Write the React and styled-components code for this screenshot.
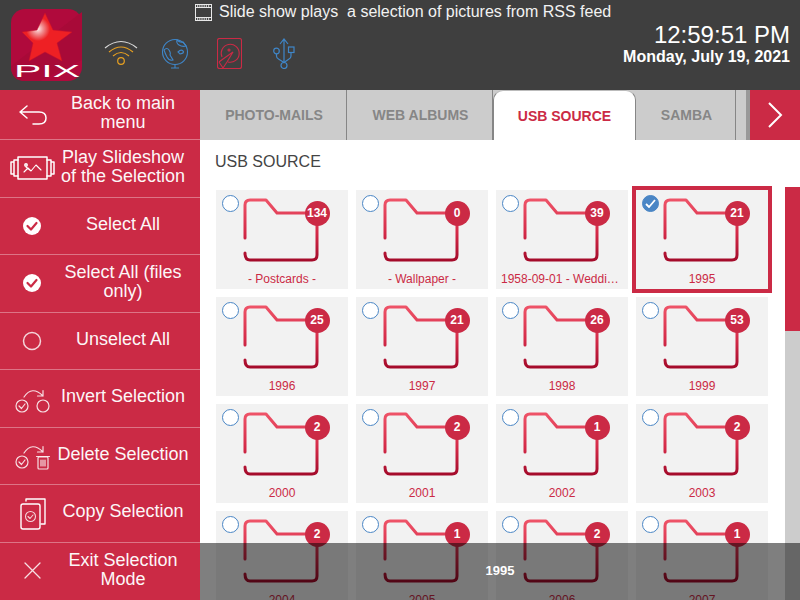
import React from 'react';
import styled, { createGlobalStyle } from 'styled-components';

const RED = '#cb2a45';

const GlobalStyle = createGlobalStyle`
  html, body {
    margin: 0;
    padding: 0;
    width: 800px;
    height: 600px;
    overflow: hidden;
    background: white;
    font-family: "Liberation Sans", Arial, sans-serif;
  }
  * {
    box-sizing: border-box;
  }
`;

const Page = styled.div`
  width: 800px;
  height: 600px;
  display: flex;
  flex-direction: column;
  overflow: hidden;
`;

const Header = styled.header`
  height: 90px;
  flex: none;
  display: flex;
  background-color: #3f3f3f;
  color: white;
`;

const Logo = styled.svg`
  width: 71px;
  height: 72px;
  margin: 9px 22px 0 11px;
  flex: none;
`;

const HeaderMiddle = styled.div`
  display: flex;
  flex-direction: column;
`;

const Title = styled.div`
  display: flex;
  align-items: center;
  gap: 7px;
  height: 24px;
  padding-left: 91px;
  font-size: 16px;
  color: #f2f2f2;
  white-space: pre;
`;

const StatusIcons = styled.div`
  display: flex;
  align-items: center;
  margin-top: 13px;
`;

const StatusIcon = styled.svg`
  flex: none;
  margin-left: ${(p) => p.$offset || 0}px;
  fill: none;
`;

const Clock = styled.div`
  margin-left: auto;
  padding: 21px 10px 0 0;
  text-align: right;
`;

const Time = styled.div`
  font-size: 24px;
  line-height: 27px;
`;

const DateLine = styled.div`
  font-size: 16px;
  font-weight: 700;
  line-height: 17px;
`;

const Main = styled.div`
  flex: 1;
  display: flex;
  min-height: 0;
  position: relative;
`;

const Sidebar = styled.nav`
  width: 200px;
  flex: none;
  display: flex;
  flex-direction: column;
  background-color: ${RED};
`;

const MenuItem = styled.div`
  height: ${(p) => (p.$first ? '50px' : '57.5px')};
  flex: none;
  display: grid;
  grid-template-columns: 48px 134px;
  align-items: center;
  padding-left: 8px;
  border-bottom: ${(p) => (p.$last ? 'none' : '1px solid rgba(255, 255, 255, 0.35)')};
  color: white;
`;

const MenuIcon = styled.svg`
  width: 48px;
  height: 40px;
  display: block;
  fill: none;
  stroke: white;
  stroke-width: 1.5;
  stroke-linecap: round;
  stroke-linejoin: round;
`;

const MenuLabel = styled.div`
  font-size: 18px;
  line-height: 19px;
  text-align: center;
  opacity: 0.96;
  margin-top: -3px;
`;

const Panel = styled.div`
  flex: 1;
  min-width: 0;
  display: flex;
  flex-direction: column;
`;

const TabBar = styled.div`
  height: 50px;
  flex: none;
  display: flex;
  background-color: #cccccc;
`;

const Tab = styled.div`
  width: ${(p) => p.$width}px;
  flex: none;
  display: flex;
  align-items: center;
  justify-content: center;
  padding-left: ${(p) => (p.$active ? '0' : '2px')};
  font-size: 14px;
  font-weight: 700;
  color: ${(p) => (p.$active ? RED : '#868686')};
  background-color: ${(p) => (p.$active ? 'white' : 'transparent')};
  border-right: 1px solid #868686;
  border-radius: ${(p) => (p.$active ? '10px 10px 0 0' : '0')};
  border-left: ${(p) => (p.$active ? '1px solid #868686' : 'none')};
  border-top: ${(p) => (p.$active ? '1px solid #bbbbbb' : 'none')};
`;

const TabFiller = styled.div`
  flex: 1;
  border-right: 4px solid #999999;
`;

const NextButton = styled.div`
  width: 50px;
  flex: none;
  display: flex;
  align-items: center;
  justify-content: center;
  background-color: ${RED};
`;

const Body = styled.div`
  flex: 1;
  min-height: 0;
  display: flex;
  background-color: white;
`;

const Content = styled.div`
  flex: 1;
  min-width: 0;
  padding: 12px 0 0 16px;
`;

const SectionTitle = styled.div`
  font-size: 16px;
  line-height: 19px;
  color: #444444;
  margin-left: -1px;
  margin-bottom: 19px;
`;

const Grid = styled.div`
  display: grid;
  grid-template-columns: repeat(4, 132px);
  grid-auto-rows: 99px;
  gap: 8px;
`;

const Card = styled.div`
  position: relative;
  display: flex;
  flex-direction: column;
  align-items: center;
  padding-top: 7px;
  background-color: #f2f2f2;
  box-shadow: ${(p) => (p.$selected ? `0 0 0 4px ${RED}` : 'none')};
`;

const Radio = styled.div`
  position: absolute;
  left: 6px;
  top: 5px;
  width: 17px;
  height: 17px;
  border-radius: 50%;
  border: 1px solid #4a86c5;
  background-color: ${(p) => (p.$checked ? '#4a86c5' : 'white')};
  display: flex;
  align-items: center;
  justify-content: center;
`;

const FolderBox = styled.div`
  position: relative;
  width: 96px;
  height: 66px;
`;

const Badge = styled.div`
  position: absolute;
  left: 70.5px;
  top: 3.5px;
  width: 25px;
  height: 25px;
  border-radius: 50%;
  background-color: ${RED};
  color: white;
  font-size: 12px;
  font-weight: 700;
  display: flex;
  align-items: center;
  justify-content: center;
`;

const CardLabel = styled.div`
  width: 122px;
  margin-top: 9px;
  font-size: 12px;
  line-height: 14px;
  color: ${RED};
  text-align: center;
  white-space: nowrap;
  overflow: hidden;
  text-overflow: ellipsis;
`;

const ScrollTrack = styled.div`
  width: 15px;
  flex: none;
  margin-top: 47px;
  background-color: #cccccc;
`;

const ScrollThumb = styled.div`
  height: 144px;
  background-color: ${RED};
`;

const Caption = styled.div`
  position: absolute;
  left: 200px;
  right: 0;
  bottom: 0;
  height: 57px;
  padding-bottom: 2px;
  background-color: rgba(0, 0, 0, 0.5);
  color: white;
  font-size: 13px;
  font-weight: 700;
  display: flex;
  align-items: center;
  justify-content: center;
`;

const FolderIcon = () => (
  <svg width="96" height="66" viewBox="0 0 96 66" fill="none">
    <defs>
      <linearGradient id="folderStroke" gradientUnits="userSpaceOnUse" x1="0" y1="0" x2="0" y2="66">
        <stop offset="0" stopColor="#f0566a" />
        <stop offset="0.55" stopColor="#d42a48" />
        <stop offset="1" stopColor="#a00828" />
      </linearGradient>
    </defs>
    <path
      d="M11 41V8Q11 3 16 3H32L43 16H83V58Q83 63 78 63H16Q11 63 11 56"
      stroke="url(#folderStroke)"
      strokeWidth="3"
      strokeLinecap="round"
      strokeLinejoin="round"
    />
  </svg>
);

const CheckMark = () => (
  <svg width="11" height="9" viewBox="0 0 11 9" fill="none">
    <path d="M1 5l3 3 6-7" stroke="white" strokeWidth="1.8" />
  </svg>
);

const Wifi = () => (
  <StatusIcon width="34" height="30" viewBox="0 0 34 30">
    <path d="M1 10Q17 -3 33 10" stroke="#d8d8d8" strokeWidth="1.2" />
    <path d="M5 14Q17 4 29 14" stroke="#e8a020" strokeWidth="1.2" />
    <path d="M9 18Q17 11 25 18" stroke="#e8a020" strokeWidth="1.2" />
    <circle cx="17" cy="23" r="3.3" stroke="#e8a020" strokeWidth="1.2" />
  </StatusIcon>
);

const Globe = () => (
  <StatusIcon $offset={23} width="28" height="32" viewBox="0 0 28 32" stroke="#3f86c8" strokeWidth="1.1">
    <circle cx="14" cy="15" r="12.5" />
    <path d="M14 27.5V31M10 31H18" />
    <path d="M3 13Q6 10 8 13T9 18L12 23Q8 24 6 20T3 13Z" />
    <path d="M16 3Q19 6 22 5L25 9Q21 10 18 8T16 3Z" />
    <path d="M17 15Q20 12 22 14T19 17Z" />
  </StatusIcon>
);

const Drive = () => (
  <StatusIcon $offset={28} width="25" height="31" viewBox="0 0 25 31" stroke={RED} strokeWidth="1.1">
    <rect x="0.5" y="0.5" width="24" height="30" rx="2" />
    <path d="M5 19A9 9 0 1 1 11 24" />
    <circle cx="12" cy="12" r="1" />
    <path d="M2 24L6 21 16 14 10 24 6 30M2 24L6 30" />
  </StatusIcon>
);

const Usb = () => (
  <StatusIcon $offset={31} width="22" height="31" viewBox="0 0 22 31" stroke="#3f86c8" strokeWidth="1.2">
    <path d="M7 6L11 1 15 6M11 1V25" />
    <circle cx="11" cy="27.5" r="3" />
    <circle cx="3.5" cy="13" r="2.8" />
    <rect x="15.5" y="9" width="5.5" height="5.5" />
    <path d="M3.5 16V18Q3.5 20 5.5 21L11 24.5 16 21Q18 20 18 18V14.5" />
  </StatusIcon>
);

const Film = () => (
  <svg width="17" height="17" viewBox="0 0 17 17" fill="none" stroke="#e8e8e8" strokeWidth="1">
    <rect x="0.5" y="0.5" width="16" height="16" />
    <path d="M0.5 3.5H16.5M0.5 13.5H16.5" />
    <path d="M2 2H15M2 15H15" strokeDasharray="1.2 1" strokeWidth="1.6" />
  </svg>
);

const LogoArt = () => (
  <Logo viewBox="11 9 71 72">
    <defs>
      <radialGradient id="starShine" cx="38" cy="29" r="12" gradientUnits="userSpaceOnUse">
        <stop offset="0" stopColor="#ffe8e8" />
        <stop offset="0.45" stopColor="#f08a8c" />
        <stop offset="1" stopColor="#ee2024" />
      </radialGradient>
    </defs>
    <rect x="11" y="9" width="71" height="72" rx="14" fill="#b00a3c" />
    <path d="M11 66Q45 40 82 12V60Q60 70 40 81H25Q11 81 11 66Z" fill="#a80a38" />
    <path
      d="M45 13L53 30 72 32 57 43 62 61 45 52 29 61 33 43 22 32 37 30Z"
      fill="url(#starShine)"
      stroke="#c81028"
      strokeWidth="0.5"
    />
    <text
      x="14"
      y="77"
      fill="white"
      fontFamily="Liberation Sans, sans-serif"
      fontSize="16"
      textLength="66"
      lengthAdjust="spacingAndGlyphs"
    >
      PIX
    </text>
  </Logo>
);

const menuIcons = {
  back: <path d="M19 11L12 17 19 23M12 17H31Q38 17 38 23T31 29H25" />,
  slideshow: (
    <>
      <rect x="10" y="9" width="29" height="22" />
      <path d="M10 12H6V28H10M6 14H3V26H6M39 12H43V28H39M43 14H46V26H43" />
      <circle cx="18" cy="17" r="1.2" />
      <path d="M16 24L20 20 23 23 28 17 33 22M18 19L23 23" strokeWidth="1.1" />
    </>
  ),
  check: (
    <>
      <circle cx="24" cy="20" r="9" fill="white" stroke="none" />
      <path d="M19.5 20L23 23.5 28.5 17" stroke={RED} strokeWidth="2.2" />
    </>
  ),
  circle: <circle cx="24" cy="20" r="8.5" strokeOpacity="0.8" />,
  invert: (
    <g strokeOpacity="0.85" strokeWidth="1.2">
      <circle cx="14" cy="28" r="6" />
      <path d="M11 28L13.5 30.5 17 26" />
      <circle cx="35" cy="28" r="6" />
      <path d="M16 19Q24 7 35 18M35 12.5V18H29.5" />
    </g>
  ),
  remove: (
    <g strokeOpacity="0.85" strokeWidth="1.2">
      <circle cx="14" cy="26" r="6" />
      <path d="M11 26L13.5 28.5 17 24" />
      <path d="M16 17Q24 5 35 16M35 10.5V16H29.5" />
      <rect x="30" y="21" width="10" height="12" rx="1" />
      <path d="M28.5 20.5H41.5M33 24V30M35 24V30M37 24V30" />
    </g>
  ),
  copy: (
    <g strokeWidth="1.4">
      <rect x="13" y="11" width="19" height="25" rx="2" />
      <path d="M18 8V6H37V31H33" />
      <circle cx="22.5" cy="23.5" r="5" strokeOpacity="0.8" strokeWidth="1.1" />
      <path d="M20 23.5L22 25.5 25 22" strokeOpacity="0.8" strokeWidth="1.1" />
    </g>
  ),
  close: <path d="M17 12L32 27M32 12L17 27" strokeOpacity="0.85" strokeWidth="1.3" />,
};

const menu = [
  { icon: 'back', label: 'Back to main menu' },
  { icon: 'slideshow', label: 'Play Slideshow of the Selection' },
  { icon: 'check', label: 'Select All' },
  { icon: 'check', label: 'Select All (files only)' },
  { icon: 'circle', label: 'Unselect All' },
  { icon: 'invert', label: 'Invert Selection' },
  { icon: 'remove', label: 'Delete Selection' },
  { icon: 'copy', label: 'Copy Selection' },
  { icon: 'close', label: 'Exit Selection Mode' },
];

const tabs = [
  { label: 'PHOTO-MAILS', width: 147 },
  { label: 'WEB ALBUMS', width: 146 },
  { label: 'USB SOURCE', width: 143, active: true },
  { label: 'SAMBA', width: 100 },
];

const folders = [
  { name: '- Postcards -', count: 134 },
  { name: '- Wallpaper -', count: 0 },
  { name: '1958-09-01 - Wedding Day', count: 39 },
  { name: '1995', count: 21, selected: true },
  { name: '1996', count: 25 },
  { name: '1997', count: 21 },
  { name: '1998', count: 26 },
  { name: '1999', count: 53 },
  { name: '2000', count: 2 },
  { name: '2001', count: 2 },
  { name: '2002', count: 1 },
  { name: '2003', count: 2 },
  { name: '2004', count: 2 },
  { name: '2005', count: 1 },
  { name: '2006', count: 2 },
  { name: '2007', count: 1 },
];

export default function App() {
  return (
    <Page>
      <GlobalStyle />
      <Header>
        <LogoArt />
        <HeaderMiddle>
          <Title>
            <Film />
            <span>Slide show plays  a selection of pictures from RSS feed</span>
          </Title>
          <StatusIcons>
            <Wifi />
            <Globe />
            <Drive />
            <Usb />
          </StatusIcons>
        </HeaderMiddle>
        <Clock>
          <Time>12:59:51 PM</Time>
          <DateLine>Monday, July 19, 2021</DateLine>
        </Clock>
      </Header>
      <Main>
        <Sidebar>
          {menu.map((item, i) => (
            <MenuItem key={item.label} $first={i === 0} $last={i === menu.length - 1}>
              <MenuIcon viewBox="0 0 48 40">{menuIcons[item.icon]}</MenuIcon>
              <MenuLabel>{item.label}</MenuLabel>
            </MenuItem>
          ))}
        </Sidebar>
        <Panel>
          <TabBar>
            {tabs.map((tab) => (
              <Tab key={tab.label} $width={tab.width} $active={tab.active}>
                {tab.label}
              </Tab>
            ))}
            <TabFiller />
            <NextButton>
              <svg width="16" height="26" viewBox="0 0 16 26" fill="none">
                <path d="M2 1L14 13 2 25" stroke="white" strokeWidth="2" />
              </svg>
            </NextButton>
          </TabBar>
          <Body>
            <Content>
              <SectionTitle>USB SOURCE</SectionTitle>
              <Grid>
                {folders.map((folder) => (
                  <Card key={folder.name} $selected={folder.selected}>
                    <Radio $checked={folder.selected}>{folder.selected && <CheckMark />}</Radio>
                    <FolderBox>
                      <FolderIcon />
                      <Badge>{folder.count}</Badge>
                    </FolderBox>
                    <CardLabel>{folder.name}</CardLabel>
                  </Card>
                ))}
              </Grid>
            </Content>
            <ScrollTrack>
              <ScrollThumb />
            </ScrollTrack>
          </Body>
        </Panel>
        <Caption>1995</Caption>
      </Main>
    </Page>
  );
}
